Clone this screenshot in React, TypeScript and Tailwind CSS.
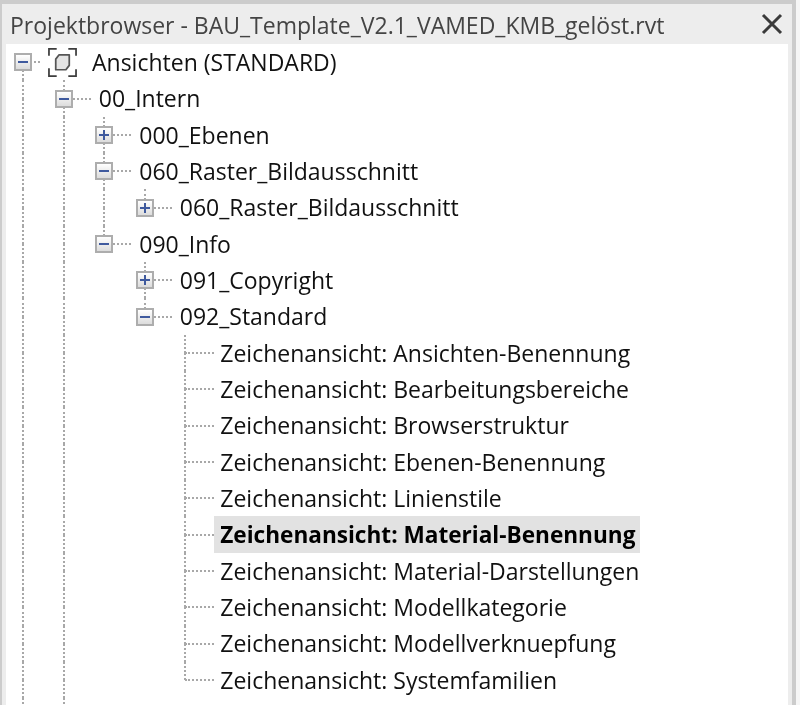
import React from "react";

type Node = "minus" | "plus" | "leaf";
type Row = { guides: string[]; node: Node; label: string; selected?: boolean; last?: boolean };

// guides: "|" = vertical line through the cell, " " = empty cell
const rows: Row[] = [
  { guides: [], node: "minus", label: "Ansichten (STANDARD)" },
  { guides: ["|"], node: "minus", label: "00_Intern" },
  { guides: ["|", "|"], node: "plus", label: "000_Ebenen" },
  { guides: ["|", "|"], node: "minus", label: "060_Raster_Bildausschnitt" },
  { guides: ["|", "|", "|"], node: "plus", label: "060_Raster_Bildausschnitt", last: true },
  { guides: ["|", "|"], node: "minus", label: "090_Info", last: true },
  { guides: ["|", "|", " "], node: "plus", label: "091_Copyright" },
  { guides: ["|", "|", " "], node: "minus", label: "092_Standard", last: true },
  ...[
    "Ansichten-Benennung",
    "Bearbeitungsbereiche",
    "Browserstruktur",
    "Ebenen-Benennung",
    "Linienstile",
    "Material-Benennung",
    "Material-Darstellungen",
    "Modellkategorie",
    "Modellverknuepfung",
    "Systemfamilien",
  ].map((n, i): Row => ({
    guides: ["|", "|", " ", " "],
    node: "leaf",
    label: "Zeichenansicht: " + n,
    selected: n === "Material-Benennung",
    last: i === 9,
  })),
];

function Box({ minus }: { minus: boolean }) {
  return (
    <span className="absolute left-1/2 top-1/2 z-10 flex h-[18px] w-[18px] -translate-x-1/2 -translate-y-1/2 items-center justify-center border-2 border-[#adadad] bg-gradient-to-b from-white to-[#dcdcdc]">
      <svg width="12" height="12" viewBox="0 0 12 12">
        <path d={minus ? "M1 6h10" : "M1 6h10M6 1v10"} stroke="#3f5a9e" strokeWidth="2" />
      </svg>
    </span>
  );
}

function Cell({
  up,
  down,
  connector,
  box,
}: {
  up?: boolean;
  down?: boolean;
  connector?: string;
  box?: "minus" | "plus";
}) {
  return (
    <div className="relative flex w-[40.5px] shrink-0 flex-col items-center">
      <div className={"h-1/2 w-0 " + (up ? "border-l-2 border-dotted border-[#a8a8a8]" : "")} />
      <div className={"h-1/2 w-0 " + (down ? "border-l-2 border-dotted border-[#a8a8a8]" : "")} />
      {connector && (
        <div className={"absolute left-1/2 top-1/2 -mt-px border-t-2 border-dotted border-[#a8a8a8] " + connector} />
      )}
      {box && <Box minus={box === "minus"} />}
    </div>
  );
}

function ViewIcon() {
  return (
    <svg width="29" height="29" viewBox="0 0 30 30" fill="none" className="ml-[4.5px] shrink-0 self-center">
      <path d="M1 8V1h8M21 1h8v7M29 22v7h-8M9 29H1v-8" stroke="#3d3d3d" strokeWidth="1.8" />
      <path
        d="M8 11.500l3.500-4.500H22v11l-3.500 4.500H8z"
        fill="#e4e4e4"
        stroke="#555555"
        strokeWidth="1.800"
        strokeLinejoin="round"
      />
    </svg>
  );
}

function TreeRow({ row }: { row: Row }) {
  const d = row.guides.length;
  const leaf = row.node === "leaf";
  return (
    <div className="flex h-[36.35px]">
      {row.guides.map((g, i) => (
        <Cell key={i} up={g === "|"} down={g === "|"} />
      ))}
      {leaf ? (
        <Cell up down={!row.last} connector="w-[29px]" />
      ) : (
        <Cell
          up={d > 0}
          down={d === 0 ? true : !row.last}
          connector={d === 0 ? "w-[17px]" : "w-[27px]"}
          box={row.node as "minus" | "plus"}
        />
      )}
      {d === 0 && <ViewIcon />}
      {row.selected ? (
        <span className="ml-[8.75px] flex h-full items-center whitespace-nowrap bg-[#e2e2e2] pl-[6px] pr-[5px] text-[22.6px] font-bold text-black">
          {row.label}
        </span>
      ) : (
        <span
          className={
            "flex h-full items-center whitespace-nowrap text-[#111111] " +
            (d === 0 ? "ml-[15px]" : "ml-[14.75px]")
          }
        >
          {row.label}
        </span>
      )}
    </div>
  );
}

export default function App() {
  return (
    <div className="h-[705px] w-[800px] overflow-hidden bg-[#f6f6f6] text-[23px] [font-family:'Open_Sans','Noto_Sans',sans-serif] blur-[0.35px]">
      <div className="h-full w-[796px] bg-[#cccccc] pl-[2px] pr-[4px] pt-[4px]">
        <div className="flex h-full flex-col bg-[#ededed]">
          <div className="flex h-[40px] shrink-0 items-center justify-between pl-[8px] pr-[9px] pt-[3px] text-[#444444]">
            <span className="whitespace-nowrap text-[23px]">
              Projektbrowser - BAU_Template_V2.1_VAMED_KMB_gelöst.rvt
            </span>
            <svg width="22" height="22" viewBox="0 0 22 22" className="-mt-[3px] shrink-0">
              <path d="M2 2l18 18M20 2L2 20" stroke="#3a3a3a" strokeWidth="3" />
            </svg>
          </div>
          <div className="mx-[4px] flex-1 overflow-hidden bg-white">
            <div className="-ml-[3px]">
              {rows.map((r, i) => (
                <TreeRow key={i} row={r} />
              ))}
              <div className="flex h-[36.35px]">
                <Cell up down />
                <Cell up down />
              </div>
            </div>
          </div>
        </div>
      </div>
    </div>
  );
}
